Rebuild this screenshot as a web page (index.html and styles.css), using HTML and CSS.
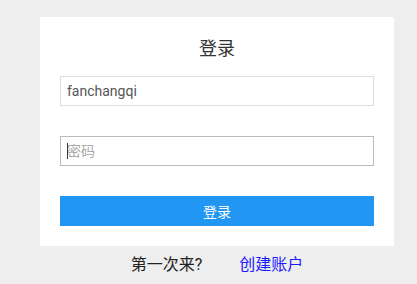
FILE: index.html
```html
<!DOCTYPE html>
<html lang="zh-CN">
<head>
    <meta charset="UTF-8">
    <title>登录</title>
    <link rel="stylesheet" href="styles.css">
</head>
<body>
    <div class="login-box">
        <h2>登录</h2>
        <form class="login-form">
            <input type="text" name="username" value="fanchangqi">
            <div class="field caret">
                <input type="password" name="password" placeholder="密码" class="focused">
            </div>
            <button type="submit">登录</button>
        </form>
    </div>
    <div class="signup">
        <span>第一次来?</span>
        <a href="#">创建账户</a>
    </div>
</body>
</html>
```

FILE: styles.css
```css
body {
    margin: 0;
    background-color: #eeeeee;
    font-family: Roboto, "Noto Sans CJK SC", sans-serif;
}

.login-box {
    width: 354px;
    margin: 17px 0 0 40px;
    padding: 20px 20px 20px;
    box-sizing: border-box;
    background-color: #ffffff;
}

h2 {
    margin: 0 0 15px;
    font-size: 18px;
    line-height: 24px;
    font-weight: normal;
    text-align: center;
    color: #333;
}

.login-form {
    display: flex;
    flex-direction: column;
    gap: 30px;
}

.field {
    display: flex;
    position: relative;
}

.field input {
    flex: 1;
}

/* curseur du champ actif */
.caret::after {
    content: "";
    position: absolute;
    left: 7px;
    top: 7px;
    width: 1px;
    height: 16px;
    background-color: #333;
}

input {
    height: 30px;
    margin: 0;
    padding: 0 6px;
    border: 1px solid #dddddd;
    box-sizing: border-box;
    font-family: Roboto, "Noto Sans CJK SC", sans-serif;
    font-size: 14px;
    color: #555;
    outline: none;
}

input.focused {
    border-color: #bbbbbb;
}

input::placeholder {
    color: #aaa;
}

button {
    height: 30px;
    border: none;
    background-color: #2196f3;
    color: white;
    font-family: Roboto, "Noto Sans CJK SC", sans-serif;
    font-size: 14px;
    cursor: pointer;
}

.signup {
    width: 354px;
    margin: 8px 0 0 40px;
    display: flex;
    justify-content: center;
    gap: 37px;
    font-size: 16px;
    line-height: 22px;
    color: #222;
}

.signup a {
    color: #1a1aff;
    text-decoration: none;
}
```
